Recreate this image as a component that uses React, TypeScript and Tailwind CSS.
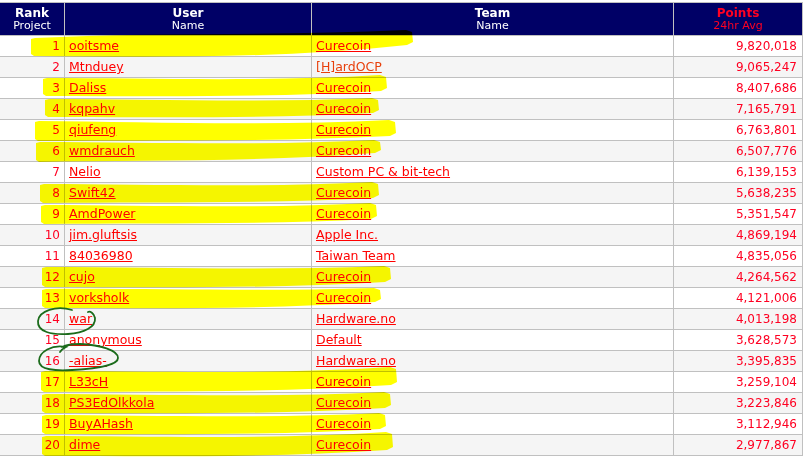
import React from "react";

type Row = [number, string, string, string];

const rows: Row[] = [
  [1, "ooitsme", "Curecoin", "9,820,018"],
  [2, "Mtnduey", "[H]ardOCP", "9,065,247"],
  [3, "Daliss", "Curecoin", "8,407,686"],
  [4, "kqpahv", "Curecoin", "7,165,791"],
  [5, "qiufeng", "Curecoin", "6,763,801"],
  [6, "wmdrauch", "Curecoin", "6,507,776"],
  [7, "Nelio", "Custom PC & bit-tech", "6,139,153"],
  [8, "Swift42", "Curecoin", "5,638,235"],
  [9, "AmdPower", "Curecoin", "5,351,547"],
  [10, "jim.gluftsis", "Apple Inc.", "4,869,194"],
  [11, "84036980", "Taiwan Team", "4,835,056"],
  [12, "cujo", "Curecoin", "4,264,562"],
  [13, "vorksholk", "Curecoin", "4,121,006"],
  [14, "war", "Hardware.no", "4,013,198"],
  [15, "anonymous", "Default", "3,628,573"],
  [16, "-alias-", "Hardware.no", "3,395,835"],
  [17, "L33cH", "Curecoin", "3,259,104"],
  [18, "PS3EdOlkkola", "Curecoin", "3,223,846"],
  [19, "BuyAHash", "Curecoin", "3,112,946"],
  [20, "dime", "Curecoin", "2,977,867"],
];

// highlight strokes: [x0, x1, topLeft, bottomLeft, topRight, bottomRight, midTop, midBottom]
const strokes: number[][] = [
  [31, 412, 38, 56, 30, 45, 34, 58],
  [43, 386, 78, 96, 75, 91, 80, 97],
  [45, 378, 99, 117, 98, 113, 101, 118],
  [35, 395, 121, 141, 120, 136, 124, 141],
  [36, 380, 142, 162, 140, 153, 144, 161],
  [40, 378, 184, 203, 182, 198, 186, 203],
  [41, 376, 205, 224, 203, 219, 207, 224],
  [42, 390, 267, 287, 266, 282, 269, 288],
  [42, 380, 289, 308, 288, 302, 290, 309],
  [41, 396, 371, 392, 367, 385, 373, 392],
  [42, 390, 394, 413, 392, 408, 396, 414],
  [42, 385, 415, 434, 413, 429, 417, 435],
  [42, 392, 436, 456, 432, 450, 438, 457],
];

function strokePath(s: number[]) {
  const [x0, x1, tl, bl, tr, br, mt, mb] = s;
  const w = x1 - x0;
  const a = x0 + w * 0.3;
  const b = x0 + w * 0.65;
  return `M${x0},${tl + 1} L${x0 + 4},${tl} C${a},${mt - 2} ${b},${mt + 2} ${x1 - 6},${tr} L${x1},${tr + 2} L${x1 + 1},${br - 3} L${x1 - 5},${br} C${b},${mb + 1} ${a},${mb - 1} ${x0 + 3},${bl} L${x0},${bl - 2} Z`;
}

export default function App() {
  return (
    <div
      className="relative w-[804px] h-[458px] overflow-hidden bg-white"
      style={{ fontFamily: "'DejaVu Sans', Verdana, sans-serif" }}
    >
      <div className="mt-[2px] w-[803px] border-t border-[#c0c0c0]">
        {/* header */}
        <div className="flex h-[33px] bg-[#000066] border-b border-[#c0c0c0]">
          <div className="w-[65px] border-r border-[#c0c0c0] flex flex-col items-center justify-center text-white">
            <div className="text-[12px] font-bold leading-[14px]">Rank</div>
            <div className="text-[11px] leading-[12px]">Project</div>
          </div>
          <div className="w-[247px] border-r border-[#c0c0c0] flex flex-col items-center justify-center text-white">
            <div className="text-[12px] font-bold leading-[14px]">User</div>
            <div className="text-[11px] leading-[12px]">Name</div>
          </div>
          <div className="w-[362px] border-r border-[#c0c0c0] flex flex-col items-center justify-center text-white">
            <div className="text-[12px] font-bold leading-[14px]">Team</div>
            <div className="text-[11px] leading-[12px]">Name</div>
          </div>
          <div className="w-[129px] border-r border-[#c0c0c0] flex flex-col items-center justify-center text-[#ff0022]">
            <div className="text-[12px] font-bold leading-[14px]">Points</div>
            <div className="text-[11px] leading-[12px]">24hr Avg</div>
          </div>
        </div>
        {rows.map(([rank, user, team, pts]) => (
          <div
            key={rank}
            className={`flex h-[21px] border-b border-[#c0c0c0] text-[12px] leading-[20px] ${
              rank % 2 === 0 ? "bg-[#f5f5f5]" : "bg-white"
            }`}
          >
            <div className="w-[65px] border-r border-[#c0c0c0] text-right pr-[4px] text-[#ff0022]">
              {rank}
            </div>
            <div className="w-[247px] border-r border-[#c0c0c0] pl-[4px] text-[#ff0000] text-[12.5px]">
              <span className="underline">{user}</span>
            </div>
            <div className="w-[362px] border-r border-[#c0c0c0] pl-[4px] text-[12.5px]">
              <span className={`underline ${team === "[H]ardOCP" ? "text-[#e8400c]" : "text-[#ff0000]"}`}>
                {team}
              </span>
            </div>
            <div className="w-[129px] border-r border-[#c0c0c0] text-right pr-[5px] text-[#ff0022]">
              {pts}
            </div>
          </div>
        ))}
      </div>

      {/* hand-drawn annotations */}
      <svg
        className="absolute left-0 top-0 pointer-events-none mix-blend-multiply"
        width="804"
        height="458"
        viewBox="0 0 804 458"
      >
        {strokes.map((s, i) => (
          <path key={i} d={strokePath(s)} fill="#ffff00" />
        ))}
      </svg>
      <svg
        className="absolute left-0 top-0 pointer-events-none"
        width="804"
        height="458"
        viewBox="0 0 804 458"
      >
        <path
          d="M72,310 C56,305 39,311 38,321 C37,332 52,335 68,334 C84,333 96,327 95,318 C94,313 90,311 88,312"
          fill="none"
          stroke="#1b6b1b"
          strokeWidth="1.8"
          strokeLinecap="round"
        />
        <path
          d="M60,352 C62,349 64,348 66,347 C52,344 39,352 39,361 C39,370 56,371 72,370 C92,369 118,366 118,358 C118,350 100,345 80,344 C72,344 66,345 62,347"
          fill="none"
          stroke="#1b6b1b"
          strokeWidth="1.8"
          strokeLinecap="round"
        />
      </svg>
    </div>
  );
}
